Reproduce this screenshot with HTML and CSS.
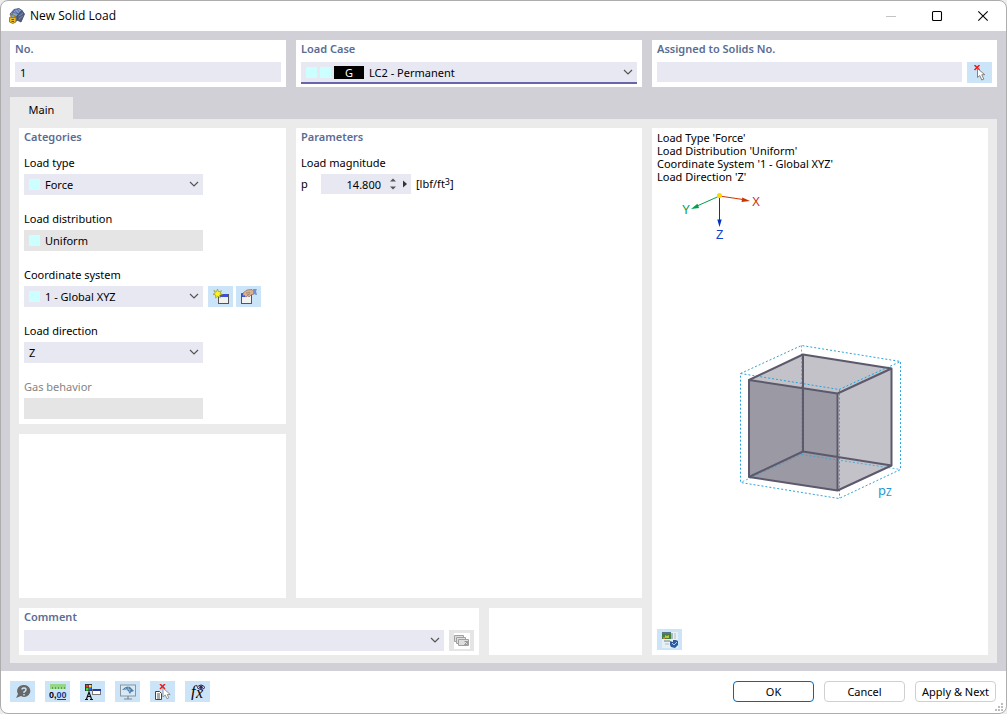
FILE: index.html
```html
<!DOCTYPE html>
<html lang="en">
<head>
<meta charset="utf-8">
<meta name="viewport" content="width=device-width, initial-scale=1">
<title>New Solid Load</title>
<link rel="stylesheet" href="styles.css">
</head>
<body>
<svg class="defs" aria-hidden="true">
  <symbol id="chevron" viewBox="0 0 10 6"><path d="M1 1l4 4 4-4" fill="none" stroke="#555" stroke-width="1.2"/></symbol>
  <symbol id="pick" viewBox="0 0 16 16">
    <path d="M2.500 0l5 5M7.500 0l-5 5" stroke="#f01818" stroke-width="1.500"/>
    <path d="M5.500 3.500v9l2.300-2 2 4.500 2-.9-2-4.400h3z" fill="#fff" stroke="#777" stroke-width=".9"/>
  </symbol>
</svg>
<div class="window">
  <header class="titlebar">
    <svg class="app-icon" viewBox="0 0 16 16" aria-hidden="true">
      <path d="M1 6L5 1.500 10 .5l3 2L8 8v5L3 10z" fill="#86a2d0" stroke="#3c4b6e" stroke-width=".8"/>
      <path d="M13 2.500L15.500 6 12 14 8 12V8z" fill="#53617f" stroke="#39425a" stroke-width=".8"/>
      <path d="M3 4l7 2M5 1.500L9.500 6.500M8 1l3 4M2 6l6 3M5 2L2.500 8" stroke="#42598c" stroke-width=".7"/>
      <path d="M10 8l4-3M10 11l4-3" stroke="#8d9ab8" stroke-width=".7"/>
      <path d="M.5 9.500h6.500v4.500l-3.200 1.500L.5 14z" fill="#e7b92c" stroke="#8b6d14" stroke-width=".8"/>
      <path d="M2 9.500V8l1.700-1L5.500 8v1.500" fill="none" stroke="#b98c1a" stroke-width="1.200"/>
      <path d="M2.500 11.500h2.500M2.500 13.500h2.500" stroke="#6b5110"/>
    </svg>
    <h1 class="title">New Solid Load</h1>
    <button class="win-btn" type="button" aria-label="Minimize" disabled><svg viewBox="0 0 10 10"><path d="M0 5.500h10" stroke="#c4c4c4"/></svg></button>
    <button class="win-btn" type="button" aria-label="Maximize"><svg viewBox="0 0 10 10"><rect x=".5" y=".5" width="9" height="9" rx="1" fill="none" stroke="#000" stroke-width="1.100"/></svg></button>
    <button class="win-btn" type="button" aria-label="Close"><svg viewBox="0 0 10 10"><path d="M.3.300l9.400 9.400M9.700.300L.3 9.700" stroke="#000" stroke-width="1.100"/></svg></button>
  </header>

  <main class="content">
    <div class="top-row">
      <section class="panel">
        <label class="heading" for="no">No.</label>
        <input class="field" id="no" type="text" value="1">
      </section>
      <section class="panel">
        <label class="heading" for="load-case">Load Case</label>
        <div class="combo active">
          <select class="field with-badge" id="load-case"><option>LC2 - Permanent</option></select>
          <span class="marks"><i class="swatch"></i><i class="swatch"></i><b class="badge">G</b></span>
          <svg class="chevron"><use href="#chevron"/></svg>
        </div>
      </section>
      <section class="panel">
        <label class="heading" for="assigned">Assigned to Solids No.</label>
        <div class="line">
          <input class="field grow" id="assigned" type="text">
          <button class="tool" type="button" aria-label="Select solids"><svg class="icon"><use href="#pick"/></svg></button>
        </div>
      </section>
    </div>

    <nav class="tabs"><button class="tab" type="button">Main</button></nav>

    <div class="page">
      <div class="left">
        <div class="upper">
          <div class="stack">
            <section class="panel">
              <h2 class="heading">Categories</h2>
              <div class="form">
                <div class="row">
                  <label class="label" for="type">Load type</label>
                  <div class="combo">
                    <select class="field with-swatch" id="type"><option>Force</option></select>
                    <span class="marks"><i class="swatch"></i></span>
                    <svg class="chevron"><use href="#chevron"/></svg>
                  </div>
                </div>
                <div class="row">
                  <label class="label" for="dist">Load distribution</label>
                  <div class="combo">
                    <select class="field with-swatch" id="dist" disabled><option>Uniform</option></select>
                    <span class="marks"><i class="swatch"></i></span>
                  </div>
                </div>
                <div class="row">
                  <label class="label" for="csys">Coordinate system</label>
                  <div class="line">
                    <div class="combo">
                      <select class="field with-swatch" id="csys"><option>1 - Global XYZ</option></select>
                      <span class="marks"><i class="swatch"></i></span>
                      <svg class="chevron"><use href="#chevron"/></svg>
                    </div>
                    <div class="tool-pair">
                      <button class="tool" type="button" aria-label="New coordinate system">
                        <svg class="icon" viewBox="0 0 16 16">
                          <rect x="5.500" y="5.500" width="10" height="9" fill="#f2f2f2" stroke="#555"/>
                          <path d="M6 5h9v3H6z" fill="#3a50e0"/>
                          <path d="M4.500 0l1.100 2.900L8.500 1.700 7 4.300l2.500 1.200-2.800.6.6 2.700-2.500-1.600L2.500 9l.3-2.900L0 5.300l2.300-1.200L.8 1.500l2.700 1.200z" fill="#fdf51c" stroke="#8d8a20" stroke-width=".6"/>
                        </svg>
                      </button>
                      <button class="tool" type="button" aria-label="Edit coordinate system">
                        <svg class="icon" viewBox="0 0 16 16">
                          <rect x=".5" y="5.500" width="10" height="9" fill="#f2f2f2" stroke="#555"/>
                          <path d="M0 4h4v4H1z" fill="#3a50e0"/>
                          <path d="M2 4l4-3 5-.5 2 2v2.500l-3 1-2 2-1-1.500-2 1.500-1.500-1.500L2 7z" fill="#d9b093" stroke="#8c6b55" stroke-width=".7"/>
                          <path d="M5 4l4-.5M6 6l3-1" stroke="#8c6b55" stroke-width=".6"/>
                          <path d="M12 0h4l-1 2 1 4-3.500-1z" fill="#6e93cf"/>
                        </svg>
                      </button>
                    </div>
                  </div>
                </div>
                <div class="row">
                  <label class="label" for="dir">Load direction</label>
                  <div class="combo">
                    <select class="field" id="dir"><option>Z</option></select>
                    <svg class="chevron"><use href="#chevron"/></svg>
                  </div>
                </div>
                <div class="row">
                  <label class="label muted" for="gas">Gas behavior</label>
                  <div class="combo"><select class="field" id="gas" disabled></select></div>
                </div>
              </div>
            </section>
            <section class="panel fill"></section>
          </div>
          <section class="panel">
            <h2 class="heading">Parameters</h2>
            <div class="form">
              <div class="row">
                <span class="label">Load magnitude</span>
                <div class="magnitude">
                  <label class="symbol" for="p">p</label>
                  <div class="spin">
                    <input class="spin-value" id="p" type="text" value="14.800">
                    <button class="spin-btn" type="button" aria-label="Step value"><svg viewBox="0 0 6 12"><path d="M0 3.500L3 .5l3 3zM0 8.500l3 3 3-3z" fill="#555"/></svg></button>
                    <button class="spin-btn" type="button" aria-label="More"><svg viewBox="0 0 6 12"><path d="M1 2.500l4 3.500-4 3.500z" fill="#333"/></svg></button>
                  </div>
                  <span class="unit">[lbf/ft<sup>3</sup>]</span>
                </div>
              </div>
            </div>
          </section>
        </div>
        <div class="lower">
          <section class="panel">
            <label class="heading" for="comment">Comment</label>
            <div class="line">
              <div class="combo grow">
                <select class="field" id="comment"><option></option></select>
                <svg class="chevron"><use href="#chevron"/></svg>
              </div>
              <button class="tool off" type="button" aria-label="Comment library" disabled>
                <svg class="icon" viewBox="0 0 16 16">
                  <path d="M0 0h16v16H0z" fill="#fff"/>
                  <g fill="#dedede" stroke="#a0a0a0"><path d="M.5 2.500h9v6h-9z"/><path d="M2.500 4.500h9v6h-9z"/><path d="M4.500 6.500h10v6h-10z"/></g>
                  <path d="M10.500 8.500h3v3h-3M10.500 11.500l3-3" stroke="#999" fill="none"/>
                </svg>
              </button>
            </div>
          </section>
          <section class="panel"></section>
        </div>
      </div>

      <section class="panel preview">
        <p class="summary">Load Type 'Force'<br>Load Distribution 'Uniform'<br>Coordinate System '1 - Global XYZ'<br>Load Direction 'Z'</p>
        <svg class="axes" viewBox="0 0 110 61" role="img" aria-label="Axes">
          <path d="M62.500 13L86 16.500" stroke="#cc3300"/><path d="M93 18l-8.500 1 .8-4.500z" fill="#cc3300"/>
          <path d="M62.500 13L40 23" stroke="#00a04a"/><path d="M34 26l6.500-5.200 1.600 4.200z" fill="#00a04a"/>
          <path d="M62.500 13v25" stroke="#0033c0"/><path d="M62.500 44l-2.200-7.500h4.400z" fill="#0033c0"/>
          <circle cx="62.500" cy="12.500" r="2.600" fill="#ffd800"/>
          <text x="95" y="23" fill="#cc3300">X</text>
          <text x="25" y="31" fill="#00a04a">Y</text>
          <text x="59" y="56" fill="#1040c8">Z</text>
        </svg>
        <div class="model">
          <svg class="cube" viewBox="0 0 170 192" role="img" aria-label="Solid with load p Z">
            <path d="M14 39L68 13.500 156.500 27.500V124.500L102.500 149.500 14 136z" fill="#c2c2c8"/>
            <path d="M14 39L102.500 52.500V149.500L14 136z" fill="#9b9aa4"/>
            <g fill="none" stroke="#2ba3dc" stroke-dasharray="2 2">
              <path d="M5.500 32.500L66.500 4.500 165.500 20.500V128.500L104 157.500 5.500 141.500z"/>
              <path d="M5.500 32.500L104 48.500 165.500 20.500M104.500 48.500V157"/>
              <path d="M66.500 4.500V113.500L5.500 141.500M66.500 113.500L165.500 128.500" opacity=".75"/>
            </g>
            <g fill="none" stroke="#5b596b" stroke-width="2" stroke-linejoin="round">
              <path d="M14 39L68 13.500 156.500 27.500V124.500L102.500 149.500 14 136z"/>
              <path d="M14 39L102.500 52.500 156.500 27.500M102.500 52.500V149.500M68 13.500V110.500L14 136M68 110.500L156.500 124.500"/>
            </g>
            <text x="143" y="154" class="load">p<tspan class="load-sub" dy="1">Z</tspan></text>
          </svg>
        </div>
        <button class="tool" type="button" aria-label="Switch picture">
          <svg class="icon" viewBox="0 0 16 16">
            <path d="M0 0h16v16H0z" fill="#e8f0f4"/>
            <path d="M0 0h9v7H0z" fill="#4b7b45"/><path d="M0 0h9v2H0z" fill="#54778c"/>
            <path d="M3 3l2 1 2-1v3H3z" fill="#b5ca36"/><path d="M1 5h2v2H1z" fill="#d17b30"/>
            <path d="M9 1h2v6H9zM2 8h6v2H2z" fill="#a9b8bb"/><path d="M12 1h2v6h-2zM3 11h4v2H3z" fill="#cbd7da"/>
            <path d="M8 9l3 1V8h3l2 1v4l-3 3-4-1-1-2z" fill="#2f5a9d"/><path d="M10 11l2 2 3-3" stroke="#a7caf2" fill="none"/>
          </svg>
        </button>
      </section>
    </div>
  </main>

  <footer class="footer">
    <div class="tools">
      <button class="tool" type="button" aria-label="Help">
        <svg class="icon" viewBox="0 0 16 16"><path d="M9 1a6 6 0 1 1-3 11L1 14l2-4A6 6 0 0 1 9 1z" fill="#686868"/><path d="M7 5.500Q7 4 9 4t2 1.700Q11 7 9 8v1M9 10v1.500" fill="none" stroke="#cce4f7" stroke-width="1.400"/></svg>
      </button>
      <button class="tool" type="button" aria-label="Units and decimal places">
        <svg class="icon wide" viewBox="0 0 18 16"><path d="M1 0h16v5H1z" fill="#96d886"/><path d="M3.500 3v2M6.500 3v2M9.500 3v2M12.500 3v2M15.500 3v2" stroke="#5c9d50"/><text x="0" y="14" class="digits">0,<tspan fill="#203a8c">00</tspan></text><path d="M8 15.500h9" stroke="#203a8c"/></svg>
      </button>
      <button class="tool" type="button" aria-label="Display properties">
        <svg class="icon" viewBox="0 0 16 16"><path d="M0 0h7v7H0z" fill="#333"/><path d="M1 1h2.500v2.500H1z" fill="#f33"/><path d="M4 1h2.500v2.500H4z" fill="#fd3"/><path d="M1 4h2.500v2.500H1z" fill="#3d3"/><path d="M4 4h2.500v2.500H4z" fill="#26f"/><path d="M0 15.500h3M1.500 15L4 8l2.500 7M2.500 12.500h3M5 15.500h3" fill="none" stroke="#111" stroke-width="1.200"/><rect x="7.500" y="5.500" width="8" height="5" fill="#fff" stroke="#777"/><path d="M8 5h8v2H8z" fill="#2a3a9c"/></svg>
      </button>
      <button class="tool" type="button" aria-label="View settings">
        <svg class="icon" viewBox="0 0 16 16"><rect x=".5" y="1" width="15" height="11" fill="#d7e9f7" stroke="#8b959e"/><path d="M2 6q4-5 8-3l4 4-3 1-1 2-2-3q-2-2-6-1z" fill="#4d789f"/><path d="M5 4l4 4M8 3l2 5M4 6q4-2 7 0" stroke="#9fc4df" stroke-width=".7" fill="none"/><path d="M8 12v3M4 15h8" stroke="#7d858c" stroke-width="1.200"/></svg>
      </button>
      <button class="tool" type="button" aria-label="Select and list">
        <svg class="icon" viewBox="0 0 16 16"><path d="M5 0l5 5M10 0L5 5" stroke="#f01818" stroke-width="1.500"/><path d="M.5 7.500h4l2 2v6h-6z" fill="#fff" stroke="#444"/><path d="M2 10h3M2 12h3M2 14h3" stroke="#555"/><path d="M8 4v9l2.200-2 1.800 3.700 1.800-.9-1.600-3.300h3z" fill="#fff" stroke="#888" stroke-width=".9"/></svg>
      </button>
      <button class="tool" type="button" aria-label="Formulas">
        <svg class="icon" viewBox="0 0 16 16"><text x="1" y="13" class="formula">f</text><text x="6" y="14" class="formula">x</text><path d="M7 3.500q4-5 8 0-4 4-8 0z" fill="#dfe2f3" stroke="#26285a"/><circle cx="11" cy="3.300" r="1.700" fill="#26285a"/></svg>
      </button>
    </div>
    <div class="actions">
      <button class="push default" type="button">OK</button>
      <button class="push" type="button">Cancel</button>
      <button class="push" type="button">Apply &amp; Next</button>
    </div>
    <svg class="grip" viewBox="0 0 9 9" aria-hidden="true"><path d="M6 0h2v2H6zM3 3h2v2H3zM6 3h2v2H6zM0 6h2v2H0zM3 6h2v2H3zM6 6h2v2H6z" fill="#bdbdbd"/></svg>
  </footer>
</div>
</body>
</html>
```
FILE: styles.css
```css
* { box-sizing: border-box; }

body {
  margin: 0;
  background: #ededed;
  color: #000;
  font: 11px/16px "Noto Sans", "Open Sans", sans-serif;
}

button, input, select {
  margin: 0;
  padding: 0;
  border: 0;
  border-radius: 0;
  background: none;
  color: inherit;
  font: inherit;
}

h1, h2, p { margin: 0; font-weight: normal; }
svg { display: block; }
.defs { position: absolute; width: 0; height: 0; }

.window {
  display: flex;
  flex-direction: column;
  min-height: 100vh;
  overflow: hidden;
  border: 1px solid #adadad;
  border-radius: 8px;
  background: #fff;
}

.titlebar { display: flex; align-items: center; height: 30px; padding-left: 8px; }
.app-icon { width: 16px; height: 16px; }
.title { flex: 1; padding-left: 5px; font-size: 12px; font-family: "Open Sans", sans-serif; }
.win-btn { display: grid; place-items: center; width: 46px; height: 30px; }
.win-btn svg { width: 10px; height: 10px; overflow: visible; }

.content {
  display: flex;
  flex: 1;
  flex-direction: column;
  padding: 9px 9px 8px;
  background: #d1d0d6;
}

.top-row { display: grid; grid-template-columns: 276fr 346fr 345fr; gap: 10px; }
.panel { min-width: 0; padding: 1px 5px 3px; background: #fff; }
.heading {
  display: block;
  margin-bottom: 6px;
  color: #5b6c93;
  font-size: 11px;
  font-weight: 600;
  line-height: 15px;
}

.field {
  display: block;
  width: 100%;
  height: 20px;
  padding: 0 5px;
  appearance: none;
  background: #e8e8f2;
  opacity: 1;
}
.grow { flex: 1; min-width: 0; }
.line { display: flex; align-items: flex-start; gap: 5px; }

.combo { position: relative; }
.combo .field { height: 21px; }
.combo .field:disabled { background: #e5e5e5; color: #000; }
.combo .with-swatch { padding-left: 21px; }
.combo .with-badge { padding-left: 68px; }
.combo.active .field { height: 22px; padding-top: 1px; border-bottom: 2px solid #6667ab; }
.marks {
  position: absolute;
  top: 4px;
  left: 5px;
  display: flex;
  align-items: center;
  gap: 3px;
  height: 13px;
  pointer-events: none;
}
.swatch { width: 11px; height: 11px; background: #cff; }
.badge {
  width: 30px;
  height: 13px;
  background: #000;
  color: #fff;
  font-weight: normal;
  line-height: 13px;
  text-align: center;
}
.chevron {
  position: absolute;
  top: 7px;
  right: 4px;
  width: 10px;
  height: 6px;
  pointer-events: none;
}

.tool {
  display: grid;
  flex: none;
  place-items: center;
  width: 25px;
  height: 21px;
  background: #cce4f7;
}
.tool.off { background: #e5e5e5; }
.tool-pair { display: flex; gap: 3px; }
.icon { width: 16px; height: 16px; }
.icon.wide { width: 18px; }

.tabs { display: flex; margin-top: 10px; }
.tab { width: 63px; height: 22px; padding-top: 3px; background: #ebebeb; }

.page {
  display: grid;
  flex: 1;
  grid-template-columns: 623fr 336fr;
  gap: 10px;
  padding: 9px 9px 8px;
  background: #ebebeb;
}
.left { display: flex; flex-direction: column; gap: 10px; min-width: 0; }
.upper { display: grid; flex: 1; grid-template-columns: 267fr 346fr; gap: 10px; }
.stack { display: flex; flex-direction: column; gap: 10px; min-width: 0; }
.fill { flex: 1; }
.lower { display: grid; grid-template-columns: 460fr 153fr; gap: 10px; }
.lower .panel { padding-bottom: 4px; }

.form { display: flex; flex-direction: column; gap: 16px; padding: 5px 0 2px; }
.row { display: flex; flex-direction: column; gap: 3px; }
.row .combo { width: 179px; }
.label { display: block; }
.muted { color: #848484; }

.magnitude { display: flex; align-items: center; }
.symbol { width: 20px; }
.spin { display: flex; align-items: center; width: 90px; height: 20px; background: #e8e8f2; }
.spin-value { flex: 1; min-width: 0; height: 20px; padding-right: 6px; text-align: right; }
.spin-btn { display: grid; place-items: center; width: 12px; height: 20px; }
.spin-btn svg { width: 6px; height: 12px; }
.unit { padding-left: 5px; }
.unit sup { font-size: 9px; line-height: 0; vertical-align: 3px; }

.preview { display: flex; flex-direction: column; padding: 3px 5px 5px; }
.summary { line-height: 13px; }
.axes { width: 110px; height: 61px; font: 12px "Liberation Sans", sans-serif; }
.model { display: grid; flex: 1; place-items: center; }
.cube { width: 170px; height: 192px; }
.load { fill: #2099d4; font: 13px "Noto Sans", sans-serif; }
.load-sub { font-size: 10px; }

.footer { position: relative; display: flex; justify-content: space-between; padding: 10px 10px 11px 9px; }
.tools { display: flex; gap: 10px; }
.digits { font: bold 9px "Liberation Sans", sans-serif; }
.formula { font: italic 16px "Liberation Serif", serif; }
.actions { display: flex; gap: 10px; }
.push { width: 81px; height: 21px; border: 1px solid #d0d0d0; border-radius: 4px; background: #fff; }
.push.default { border-color: #0067c0; }
.grip { position: absolute; right: 2px; bottom: 1px; width: 9px; height: 9px; }
```
